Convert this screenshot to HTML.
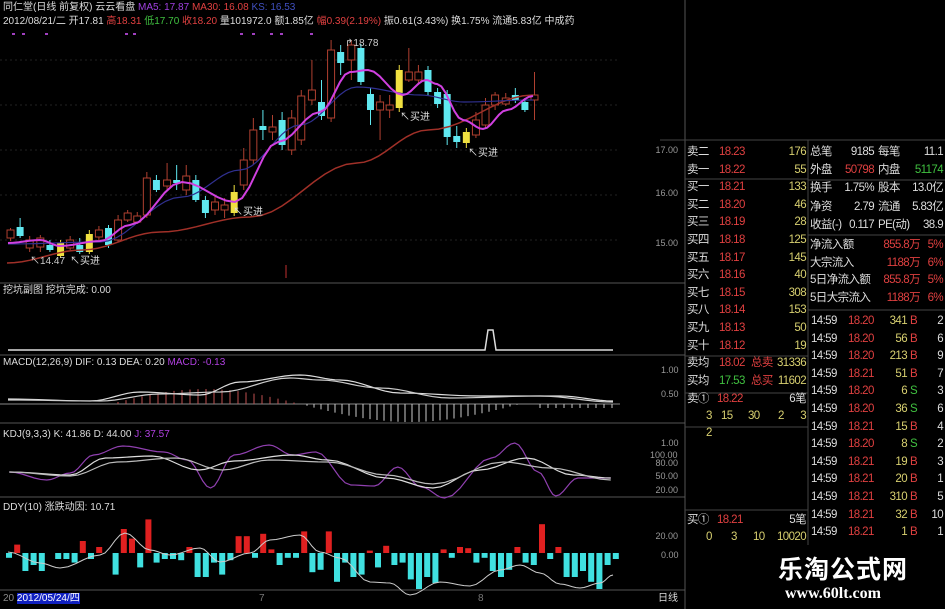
<!DOCTYPE html>
<html><head><meta charset="utf-8"><style>
body{margin:0;background:#000;width:945px;height:609px;overflow:hidden;font-family:"Liberation Sans","Noto Sans CJK SC",sans-serif;}
svg{position:absolute;left:0;top:0}
.t{position:absolute;font-size:10px;color:#ddd;white-space:nowrap;line-height:12px}
.p{position:absolute;font-size:11.5px;line-height:14px;white-space:nowrap;color:#ddd;letter-spacing:-0.6px;font-family:"Liberation Sans","Noto Sans CJK SC",sans-serif;}
.r{color:#e04040}.y{color:#d8d070}.g{color:#40c040}.w{color:#ddd}
</style></head><body>
<svg id="s" width="945" height="609" xmlns="http://www.w3.org/2000/svg"></svg>
<div class="t" style="left:3px;top:2px">同仁堂(日线 前复权) 云云看盘 <span style="color:#a040e0">MA5: 17.87</span> <span class="r">MA30: 16.08</span> <span style="color:#4050c0">KS: 16.53</span></div>
<div class="t" style="left:3px;top:16px">2012/08/21/二 开17.81 <span class="r">高18.31</span> <span class="g">低17.70</span> <span class="r">收18.20</span> 量101972.0 额1.85亿 <span class="r">幅0.39(2.19%)</span> 振0.61(3.43%) 换1.75% 流通5.83亿 中成药</div>
<div class="t" style="left:3px;top:285px">挖坑副图 挖坑完成: 0.00</div>
<div class="t" style="left:3px;top:357px">MACD(12,26,9) DIF: 0.13 DEA: 0.20 <span style="color:#b040e0">MACD: -0.13</span></div>
<div class="t" style="left:3px;top:429px">KDJ(9,3,3) K: 41.86 D: 44.00 <span style="color:#b040e0">J: 37.57</span></div>
<div class="t" style="left:3px;top:502px">DDY(10) 涨跌动因: 10.71</div>
<div class="t" style="left:3px;top:593px;color:#888">20 <span style="background:#1020c0;color:#fff">2012/05/24/四</span></div>
<div class="t" style="left:658px;top:593px">日线</div>
<div class="t" style="left:259px;top:593px;color:#777">7</div>
<div class="t" style="left:478px;top:593px;color:#777">8</div>
<div class="t" style="left:70px;top:256px;color:#ddd">↖买进</div>
<div class="t" style="left:233px;top:207px">↖买进</div>
<div class="t" style="left:400px;top:112px">↖买进</div>
<div class="t" style="left:468px;top:148px">↖买进</div>
<div class="t" style="left:345px;top:38px;color:#ccc">↱18.78</div>
<div class="t" style="left:30px;top:256px;color:#ccc">↖14.47</div>
<div id="ax"></div>
<div id="rp"></div>
<div style="position:absolute;left:778px;top:553px;font-size:25px;font-weight:bold;color:#fff;font-family:'Noto Sans CJK SC',sans-serif;letter-spacing:1px;line-height:30px">乐淘公式网</div>
<div style="position:absolute;left:785px;top:585px;font-size:16px;font-weight:bold;color:#fff;font-family:'Liberation Serif',serif;line-height:18px">www.60lt.com</div>
<script>
var s=document.getElementById('s'),h='';
function L(x1,y1,x2,y2,c,w,d){h+='<line x1="'+x1+'" y1="'+y1+'" x2="'+x2+'" y2="'+y2+'" stroke="'+c+'" stroke-width="'+(w||1)+'"'+(d?' stroke-dasharray="'+d+'"':'')+'/>';}
function P(pts,c,w){h+='<polyline fill="none" stroke="'+c+'" stroke-width="'+(w||1)+'" points="'+pts.map(function(p){return p.join(',')}).join(' ')+'"/>';}
function sm(pts,n){var o=[];for(var i=0;i<pts.length-1;i++){for(var k=0;k<n;k++){var t=k/n;o.push([pts[i][0]+(pts[i+1][0]-pts[i][0])*t,pts[i][1]+(pts[i+1][1]-pts[i][1])*(1-Math.cos(t*Math.PI))/2]);}}o.push(pts[pts.length-1]);return o;}
[283,355,423,497,590].forEach(function(y){L(0,y,685,y,'#555',1)});
L(685,0,685,609,'#555');L(660,140,945,140,'#444');
[60,105,150,195,240].forEach(function(y){L(0,y,620,y,'#222',1,'2,3')});
[[12,33],[22,33],[45,33],[125,33],[133,33],[240,33],[252,33],[270,33],[280,33],[310,33]].forEach(function(p){h+='<rect x="'+p[0]+'" y="'+p[1]+'" width="3" height="2" fill="#a040c0"/>'});
var C=[[8,230,238,228,241,'r'],[17,227,236,218,238,'c'],[26,240,248,236,252,'r'],[36,238,247,235,252,'r'],[45,245,250,240,252,'c'],[55,243,256,240,258,'y'],[64,240,248,236,250,'r'],[73,245,252,238,254,'c'],[82,234,252,230,254,'y'],[91,230,237,226,240,'r'],[100,228,245,225,248,'c'],[109,220,240,215,242,'r'],[118,213,220,210,222,'r'],[127,216,222,212,224,'r'],[136,178,215,172,218,'r'],[145,180,190,175,192,'c'],[155,180,186,163,190,'r'],[164,180,183,165,190,'c'],[173,176,190,165,195,'r'],[182,180,200,175,202,'c'],[191,200,213,196,218,'c'],[200,202,210,195,215,'r'],[209,205,210,198,218,'r'],[218,192,213,185,216,'y'],[227,160,185,148,190,'r'],[236,130,160,118,165,'r'],[245,126,130,110,140,'c'],[254,127,132,115,140,'r'],[263,120,145,112,150,'c'],[272,118,150,110,155,'r'],[281,96,140,90,145,'r'],[291,90,100,60,105,'r'],[300,102,116,80,120,'c'],[309,50,118,40,122,'r'],[318,52,63,45,75,'c'],[328,45,60,40,80,'r'],[337,48,82,44,85,'c'],[346,94,110,88,125,'c'],[355,102,110,95,140,'r'],[364,105,110,95,118,'r'],[373,70,108,65,112,'y'],[382,72,80,48,82,'r'],[391,72,80,65,85,'r'],[400,70,92,66,96,'c'],[409,92,104,88,108,'c'],[418,94,137,90,145,'c'],[427,136,142,126,148,'c'],[436,132,143,128,148,'y'],[445,120,135,112,138,'r'],[454,105,125,98,128,'r'],[463,95,105,92,110,'r'],[473,98,104,93,106,'r'],[482,95,100,88,103,'c'],[491,102,110,98,112,'c'],[500,95,100,72,120,'r']];
C.forEach(function(c){var x=c[0]*1.065+2,col=c[5]=='r'?'#b04030':(c[5]=='c'?'#60e8f0':'#f0e040');
L(x,c[3],x,c[4],col);
if(c[5]=='r')h+='<rect x="'+(x-3.5)+'" y="'+c[1]+'" width="7" height="'+(c[2]-c[1])+'" fill="#000" stroke="'+col+'"/>';
else h+='<rect x="'+(x-3.5)+'" y="'+c[1]+'" width="7" height="'+(c[2]-c[1])+'" fill="'+col+'"/>';});
L(286,265,286,278,'#c03030');
P(sm([[7,263],[82,250],[160,232],[250,217],[357,163],[428,130],[533,95]],10),'#a03028',1.5);
P(sm([[8,244],[100,242],[182,197],[240,170],[300,125],[357,87],[420,95],[464,102],[533,100]],10),'#303090',1.2);
P(sm([[8,243],[40,240],[60,246],[100,241],[130,225],[182,182],[235,202],[278,142],[320,112],[350,72],[368,70],[403,95],[426,80],[437,84],[463,120],[483,129],[507,110],[533,96]],6),'#d040e0',2);
P([[8,350],[485,350],[488,330],[493,330],[496,350],[613,350]],'#ddd',1.5);
L(0,404,620,404,'#888');
for(var x=110;x<300;x+=8)L(x,404,x,404-(15*Math.sin((x-110)/190*Math.PI)),'#c05050');
for(var x=300;x<520;x+=7)L(x,404,x,404+(18*Math.sin((x-300)/220*Math.PI)),'#ccc');
for(var x=540;x<615;x+=8)L(x,404,x,408,'#ccc');
P(sm([[8,399],[90,401],[140,392],[200,395],[240,382],[300,375],[340,380],[400,393],[480,396],[560,396],[613,401]],8),'#ddd',1.2);
P(sm([[8,400],[100,401],[160,394],[220,392],[290,378],[320,380],[380,388],[450,398],[540,396],[613,402]],8),'#ccc',1.2);
P(sm([[8,472],[40,480],[60,473],[80,455],[105,446],[140,452],[160,460],[180,488],[200,455],[230,445],[250,455],[270,452],[300,485],[320,486],[340,467],[360,487],[380,498],[420,458],[440,443],[460,472],[475,496],[494,478],[522,478]].map(function(p){return[p[0]*1.17,p[1]]}),6),'#9040b0',1.2);
P(sm([[8,472],[60,475],[90,458],[130,456],[170,470],[200,461],[250,455],[280,460],[330,478],[370,488],[410,470],[450,458],[490,475],[522,478]].map(function(p){return[p[0]*1.17,p[1]]}),6),'#ddd',1.2);
P(sm([[8,472],[60,476],[100,462],[150,458],[190,470],[230,460],[280,462],[330,475],[370,484],[430,462],[470,468],[522,480]].map(function(p){return[p[0]*1.17,p[1]]}),6),'#bbb',1.2);
var D=[-4,7,-15,-10,-15,0,-5,-5,-8,10,-5,5,0,-18,20,12,-12,28,-8,-5,-5,-6,5,-20,-20,-8,-18,-6,14,14,-4,16,3,-10,-4,-4,18,-16,-14,18,-24,-8,-20,-18,2,-12,6,-10,-8,-22,-30,-20,-25,3,-4,5,4,-8,-4,-15,-20,-14,5,-8,-10,24,-5,5,-20,-20,-15,-24,-30,-10,-5,10];
D.forEach(function(v,i){var x=6+i*8.2;if(x>615)return;h+='<rect x="'+x+'" y="'+(v>0?553-v*1.2:553)+'" width="6" height="'+Math.abs(v*1.2)+'" fill="'+(v>0?'#e02020':'#40e0e0')+'"/>';});
P(sm([[8,552],[40,563],[60,568],[100,555],[125,533],[150,550],[170,555],[200,548],[220,562],[250,553],[270,540],[300,535],[320,552],[340,558],[370,582],[390,583],[410,595],[440,582],[470,586],[500,570],[520,565],[540,573],[560,584],[580,588],[600,583],[613,575]],5),'#ccc',1);
var ax='';
[['17.00',144],['16.00',187],['15.00',237],['1.00',364],['0.50',388],['1.00',437],['100.00',449],['80.00',457],['50.00',470],['20.00',484],['20.00',530],['0.00',549]].forEach(function(a){ax+='<div class="t" style="left:'+(683-a[0].length*5.5)+'px;top:'+a[1]+'px;color:#999;font-size:9px">'+a[0]+'</div>'});
document.getElementById('ax').innerHTML=ax;
L(808,140,808,310,'#444');L(685,179,808,179,'#444');L(685,356,808,356,'#444');L(685,393,808,393,'#444');L(685,427,808,427,'#444');L(685,510,808,510,'#444');L(808,180,945,180,'#444');L(808,235,945,235,'#444');L(808,310,945,310,'#444');L(808,310,808,545,'#444');
s.innerHTML=h;
var rp='';function T(x,y,t,c,al){rp+='<div class="p '+(c||'w')+'" style="'+(al?'right:'+(945-x)+'px':'left:'+x+'px')+';top:'+(y-7)+'px">'+t+'</div>';}
var ob=[['卖二','18.23','176'],['卖一','18.22','55'],['买一','18.21','133'],['买二','18.20','46'],['买三','18.19','28'],['买四','18.18','125'],['买五','18.17','145'],['买六','18.16','40'],['买七','18.15','308'],['买八','18.14','153'],['买九','18.13','50'],['买十','18.12','19']];
ob.forEach(function(o,i){var y=152+i*17.6;T(687,y,o[0]);T(719,y,o[1],'r');T(806,y,o[2],'y',1);});
T(687,363,'卖均');T(719,363,'18.02','r');T(751,363,'总卖','r');T(806,363,'31336','y',1);
T(687,381,'买均');T(719,381,'17.53','g');T(751,381,'总买','r');T(806,381,'11602','y',1);
T(687,399,'卖①');T(717,399,'18.22','r');T(806,399,'6笔',0,1);
T(706,416,'3','y');T(721,416,'15','y');T(748,416,'30','y');T(778,416,'2','y');T(806,416,'3','y',1);
T(706,433,'2','y');
T(687,520,'买①');T(717,520,'18.21','r');T(806,520,'5笔',0,1);
T(706,537,'0','y');T(731,537,'3','y');T(753,537,'10','y');T(777,537,'100','y');T(806,537,'20','y',1);
var rr=[['总笔','9185','每笔','11.1','w','w'],['外盘','50798','内盘','51174','r','g'],['换手','1.75%','股本','13.0亿','w','w'],['净资','2.79','流通','5.83亿','w','w'],['收益(-)','0.117','PE(动)','38.9','w','w']];
rr.forEach(function(o,i){var y=152+i*18.2;T(810,y,o[0]);T(874,y,o[1],o[4],1);T(878,y,o[2]);T(943,y,o[3],o[5],1);});
[['净流入额','855.8万','5%'],['大宗流入','1188万','6%'],['5日净流入额','855.8万','5%'],['5日大宗流入','1188万','6%']].forEach(function(o,i){var y=245+i*17.6;T(810,y,o[0]);T(920,y,o[1],'r',1);T(943,y,o[2],'r',1);});
var tr=[['18.20','341','B','2'],['18.20','56','B','6'],['18.20','213','B','9'],['18.21','51','B','7'],['18.20','6','S','3'],['18.20','36','S','6'],['18.21','15','B','4'],['18.20','8','S','2'],['18.21','19','B','3'],['18.21','20','B','1'],['18.21','310','B','5'],['18.21','32','B','10'],['18.21','1','B','1']];
tr.forEach(function(o,i){var y=321+i*17.6;T(811,y,'14:59');T(848,y,o[0],'r');T(907,y,o[1],'y',1);T(910,y,o[2],o[2]=='B'?'r':'g');T(943,y,o[3],0,1);});
document.getElementById('rp').innerHTML=rp;
</script>
</body></html>
